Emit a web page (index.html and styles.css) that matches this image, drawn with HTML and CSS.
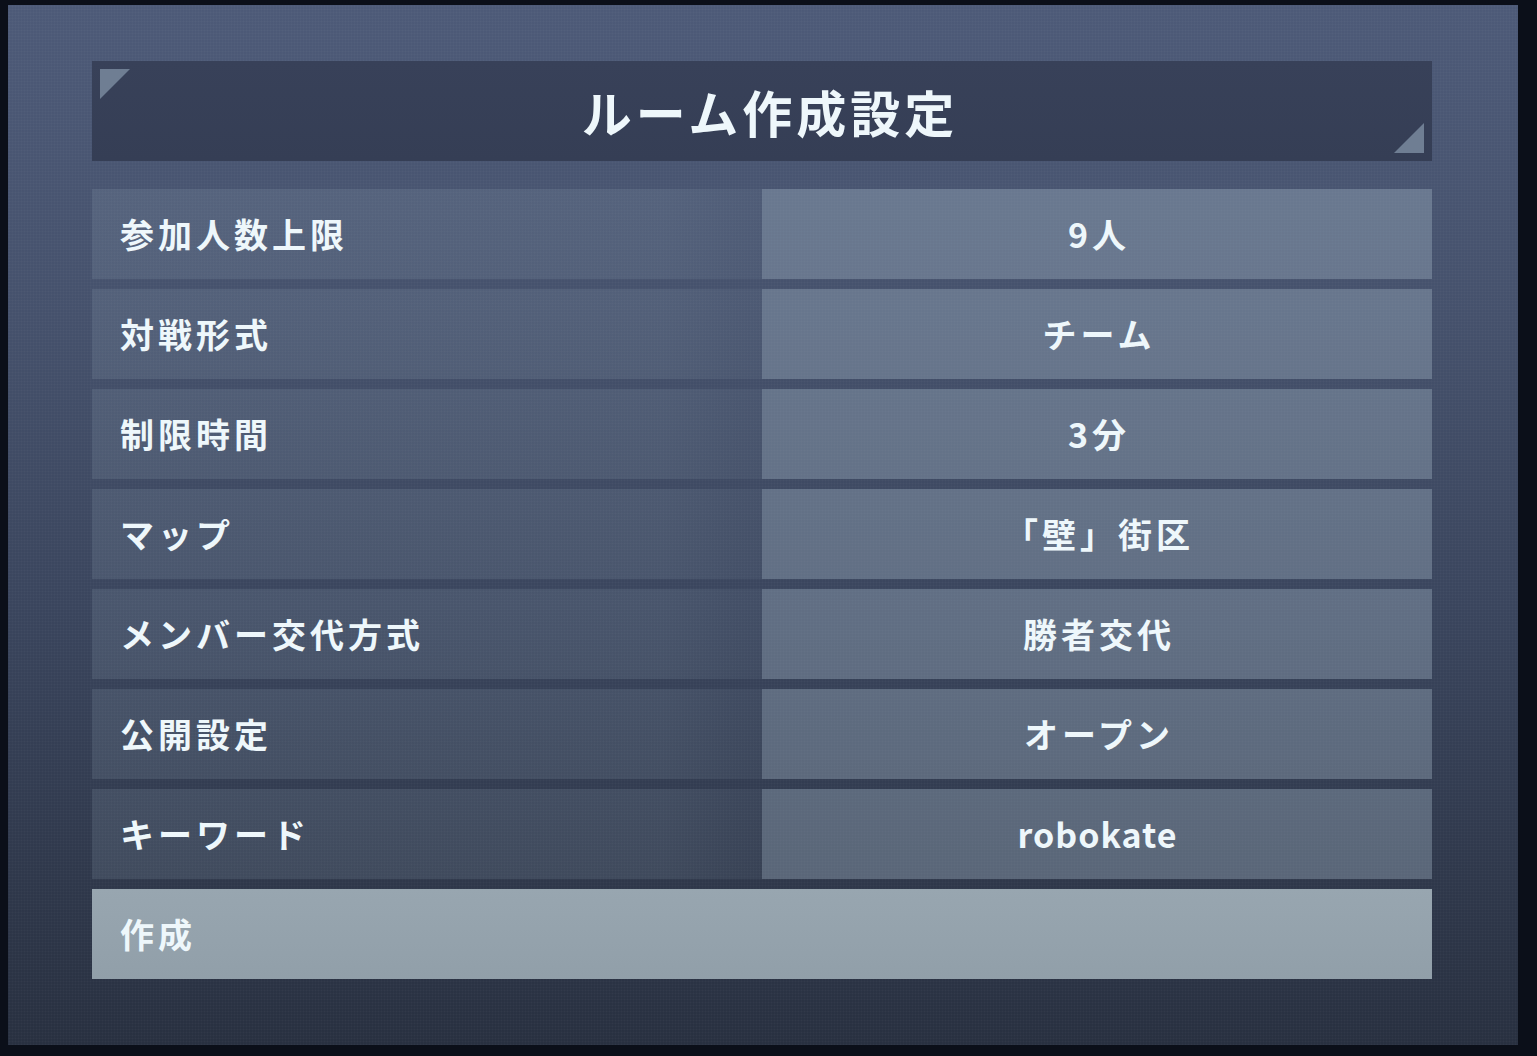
FILE: index.html
```html
<!DOCTYPE html>
<html lang="ja">
<head>
<meta charset="utf-8">
<title>ルーム作成設定</title>
<link rel="stylesheet" href="styles.css">
</head>
<body>
  <main class="panel">
    <header class="title-bar">
      <h1 class="title">ルーム作成設定</h1>
    </header>
    <section class="settings">
      <div class="row"><div class="label">参加人数上限</div><div class="value">9人</div></div>
      <div class="row"><div class="label">対戦形式</div><div class="value">チーム</div></div>
      <div class="row"><div class="label">制限時間</div><div class="value">3分</div></div>
      <div class="row"><div class="label">マップ</div><div class="value">「壁」街区</div></div>
      <div class="row"><div class="label">メンバー交代方式</div><div class="value">勝者交代</div></div>
      <div class="row"><div class="label">公開設定</div><div class="value">オープン</div></div>
      <div class="row"><div class="label">キーワード</div><div class="value value-latin">robokate</div></div>
      <button class="create">作成</button>
    </section>
  </main>
</body>
</html>
```
FILE: styles.css
```css
html, body {
  margin: 0;
  padding: 0;
  height: 100%;
}
body {
  background: #0b0f19;
  padding: 5px 0 0 8px;
  box-sizing: border-box;
  font-family: "Noto Sans CJK JP", "Noto Sans", sans-serif;
  color: #eef7fb;
}
.panel {
  width: 1510px;
  height: 1040px;
  box-sizing: border-box;
  padding: 56px 86px 0 84px;
  background:
    radial-gradient(circle, rgba(255,255,255,0.035) 0.9px, transparent 1.1px) 0 0 / 3px 3px,
    linear-gradient(180deg, #4d5a78 0%, #45516c 30%, #3a455d 58%, #2f384b 84%, #283040 100%);
  display: flex;
  flex-direction: column;
}
.title-bar {
  position: relative;
  height: 100px;
  background: linear-gradient(180deg, #384159 0%, #353e55 100%);
  display: flex;
  align-items: center;
  justify-content: center;
}
.title-bar::before,
.title-bar::after {
  content: "";
  position: absolute;
  width: 30px;
  height: 30px;
  background: #6f7e93;
}
.title-bar::before {
  left: 8px;
  top: 8px;
  clip-path: polygon(0 0, 100% 0, 0 100%);
}
.title-bar::after {
  right: 8px;
  bottom: 8px;
  clip-path: polygon(100% 0, 100% 100%, 0 100%);
}
.title {
  margin: 0 0 0 16px;
  font-size: 50px;
  font-weight: 700;
  letter-spacing: 4px;
  line-height: 1;
}
.settings {
  margin-top: 28px;
  display: flex;
  flex-direction: column;
  gap: 10px;
}
.row {
  display: grid;
  grid-template-columns: 670px 670px;
  height: 90px;
}
.label,
.value {
  display: flex;
  align-items: center;
  font-size: 34px;
  font-weight: 700;
  letter-spacing: 4px;
  line-height: 1;
}
.label {
  padding-left: 28px;
  background: linear-gradient(90deg, rgba(155,175,190,0.16) 0%, rgba(155,175,190,0.15) 85%, rgba(155,175,190,0.08) 100%);
}
.value {
  justify-content: center;
  padding-left: 4px;
  background: rgba(160,180,195,0.38);
}
.value-latin {
  letter-spacing: 1px;
  padding-left: 1px;
  font-weight: 600;
}
.create {
  height: 90px;
  border: 0;
  margin: 0;
  padding: 0 0 0 28px;
  text-align: left;
  background: linear-gradient(180deg, #98a6b0 0%, #919fa9 100%);
  font-family: inherit;
  color: #eef7fb;
  font-size: 34px;
  font-weight: 700;
  letter-spacing: 4px;
  line-height: 1;
}
```
